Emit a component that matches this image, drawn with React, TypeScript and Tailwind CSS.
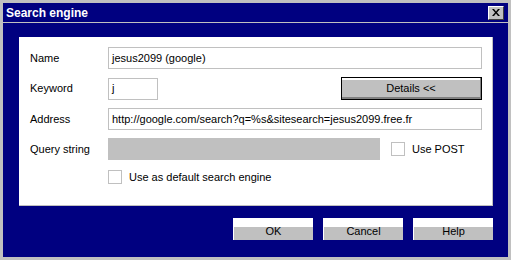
import React from "react"

const FONT = { fontFamily: '"Liberation Sans", Arial, sans-serif' }

function TextBox({ value, className }: { value: string; className: string }) {
  return (
    <div className={`flex h-[22px] items-center border border-[#c0c0c0] bg-white px-[3px] text-[11px] text-black ${className}`}>
      {value}
    </div>
  )
}

function Check({ label }: { label: string }) {
  return (
    <div className="flex items-center gap-[7px]">
      <span className="h-[14px] w-[14px] border border-[#c0c0c0] bg-white" />
      <span className="text-[11px] leading-[14px] text-black">{label}</span>
    </div>
  )
}

function DialogButton({ label }: { label: string }) {
  return (
    <button
      type="button"
      className="flex h-[22px] w-[80px] flex-col border-l border-white bg-[#c0c0c0] text-[11px] text-black"
    >
      <span className="h-[9px] w-full bg-white" />
      <span className="-mt-[5px] flex w-full flex-1 items-center justify-center">{label}</span>
    </button>
  )
}

export default function App() {
  return (
    <div className="h-[260px] w-[511px] border-[3px] border-[#c0c0c0] bg-[#000080]" style={FONT}>
      <div className="flex h-[19px] items-center justify-between pl-[3px] pr-[4px]">
        <span className="text-[12px] font-bold text-white">Search engine</span>
        <button
          type="button"
          className="flex h-[14px] w-[16px] items-center justify-center border border-b-[#404040] border-l-white border-r-[#404040] border-t-white bg-[#c0c0c0]"
        >
          <svg width="8" height="7" viewBox="0 0 8 7">
            <path d="M0 0h2l2 2.5L6 0h2L5 3.5 8 7H6L4 4.5 2 7H0l3-3.5z" fill="#000" />
          </svg>
        </button>
      </div>
      <div className="h-px bg-[#c0c0c0]" />

      <div className="ml-[16px] mr-[15px] mt-[14px] flex h-[169px] flex-col gap-[8px] border-b border-r border-[#c0c0c0] bg-white pl-[11px] pr-[10px] pt-[10px]">
        <div className="flex items-center">
          <span className="w-[78px] text-[11px] text-black">Name</span>
          <TextBox value="jesus2099 (google)" className="flex-1" />
        </div>
        <div className="flex items-center">
          <span className="w-[78px] text-[11px] text-black">Keyword</span>
          <TextBox value="j" className="w-[50px]" />
          <button
            type="button"
            className="ml-auto flex h-[23px] w-[141px] flex-col border border-black bg-[#c0c0c0] text-[11px] text-black"
          >
            <span className="h-[2px] w-full border-r border-[#808080] bg-white" />
            <span className="flex w-full flex-1 items-center justify-center border-r border-[#808080]">Details &lt;&lt;</span>
            <span className="h-[2px] w-full bg-[#808080]" />
          </button>
        </div>
        <div className="flex items-center">
          <span className="w-[78px] text-[11px] text-black">Address</span>
          <TextBox value="http://google.com/search?q=%s&sitesearch=jesus2099.free.fr" className="flex-1" />
        </div>
        <div className="flex items-center">
          <span className="w-[78px] text-[11px] text-black">Query string</span>
          <div className="h-[22px] w-[272px] bg-[#c0c0c0]" />
          <div className="ml-[11px]">
            <Check label="Use POST" />
          </div>
        </div>
        <div className="mt-[2px] pl-[78px]">
          <Check label="Use as default search engine" />
        </div>
      </div>

      <div className="mr-[15px] mt-[12px] flex justify-end gap-[10px]">
        <DialogButton label="OK" />
        <DialogButton label="Cancel" />
        <DialogButton label="Help" />
      </div>
    </div>
  )
}
